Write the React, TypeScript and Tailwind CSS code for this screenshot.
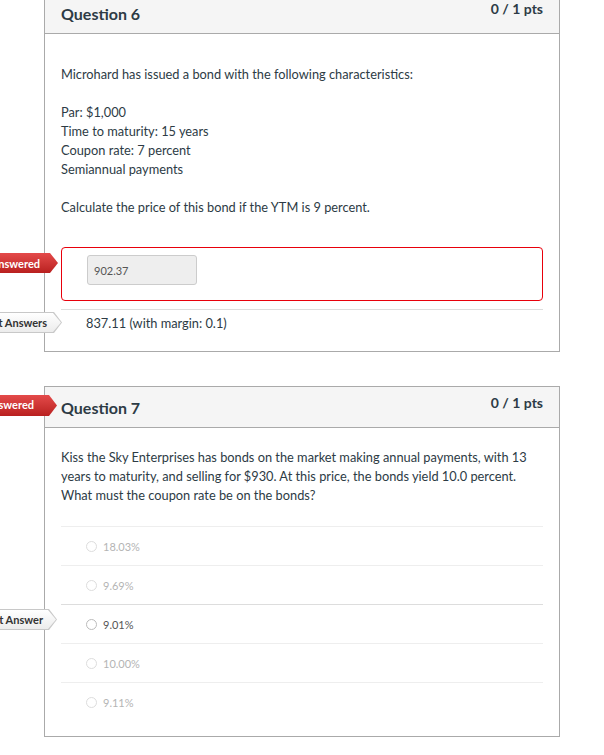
import React from 'react';

type Tag = { text: string; kind: 'red' | 'gray'; top: number; tip: number; pr: number; h: number; base: number };

// base = page x of the containing block's left edge, tip = page x of the arrow point
const Flag = ({ tag }: { tag: Tag }) => {
    const w = 130;
    const left = tag.tip - w - tag.base;
    const shape = "[clip-path:polygon(0_0,calc(100%-8px)_0,100%_50%,calc(100%-8px)_100%,0_100%)]";
    if (tag.kind === 'red') {
        return (
            <div className="absolute z-10" style={{ top: tag.top, left, width: w }}>
                <div
                    className={`${shape} flex items-center justify-end bg-linear-to-b from-[#e44a4a] to-[#b91f1f] text-white font-bold text-[11px] whitespace-nowrap`}
                    style={{ height: tag.h, paddingRight: tag.pr }}
                >
                    {tag.text}
                </div>
            </div>
        );
    }
    return (
        <div className="absolute z-10" style={{ top: tag.top, left, width: w }}>
            <div className={`${shape} bg-[#c8c8c8] py-px pr-px`}>
                <div
                    className={`${shape} flex items-center justify-end bg-linear-to-b from-white to-[#ececec] text-[#333] font-bold text-[11px] whitespace-nowrap`}
                    style={{ height: tag.h - 2, paddingRight: tag.pr - 1 }}
                >
                    {tag.text}
                </div>
            </div>
        </div>
    );
};

const Header = ({ title }: { title: string }) => (
    <div className="flex justify-between items-start px-4 h-[41px] bg-[#f5f5f5] border-b border-[#aaa]">
        <h2 className="pt-[11px] text-[16px] leading-[20px] font-bold text-[#2d3b45]">{title}</h2>
        <div className="pt-[7px] text-[14px] leading-[18px] font-bold text-[#2d3b45]">0 / 1 pts</div>
    </div>
);

const options = [
    { label: "18.03%", strong: false },
    { label: "9.69%", strong: false },
    { label: "9.01%", strong: true },
    { label: "10.00%", strong: false },
    { label: "9.11%", strong: false },
];

export default function App() {
    return (
        <div className="min-h-screen bg-white font-['Lato','Open_Sans',sans-serif] text-[#2d3b45] overflow-hidden">
            {/* Question 6 */}
            <div className="relative ml-[44px] w-[516px] -mt-[8px] border border-[#aaa] bg-white">
                <Header title="Question 6" />
                <div className="px-4 pt-[31px] text-[12.8px] leading-[19px]">
                    <p className="mb-[19px]">Microhard has issued a bond with the following characteristics:</p>
                    <p className="mb-[19px]">
                        Par: $1,000<br />
                        Time to maturity: 15 years<br />
                        Coupon rate: 7 percent<br />
                        Semiannual payments
                    </p>
                    <p>Calculate the price of this bond if the YTM is 9 percent.</p>

                    <div className="relative mt-[30px] border border-[#e8000b] rounded-[4px] h-[54px] pt-[7px] pl-[25px]">
                        <Flag tag={{ text: "Unanswered", kind: 'red', top: 5, tip: 58, pr: 18, h: 20, base: 62 }} />
                        <div className="w-[110px] h-[30px] bg-[#eee] border border-[#ccc] rounded-[3px] flex items-center pl-[6px] text-[11px] text-[#555]">
                            902.37
                        </div>
                    </div>

                    <div className="relative mt-[8px] border-t border-[#ddd] pt-[4px] pb-[18px] pl-[25px]">
                        <Flag tag={{ text: "Correct Answers", kind: 'gray', top: 2, tip: 62, pr: 15, h: 21, base: 61 }} />
                        837.11 (with margin: 0.1)
                    </div>
                </div>
            </div>

            {/* Question 7 */}
            <div className="relative ml-[44px] w-[516px] mt-[34px] border border-[#aaa] bg-white">
                <Flag tag={{ text: "Unanswered", kind: 'red', top: 8, tip: 57, pr: 23, h: 21, base: 45 }} />
                <Header title="Question 7" />
                <div className="px-4 pt-[20px] pb-[15px] text-[12.8px] leading-[19px]">
                    <p>
                        Kiss the Sky Enterprises has bonds on the market making annual payments, with 13 years to maturity, and selling for $930. At this price, the bonds yield 10.0 percent. What must the coupon rate be on the bonds?
                    </p>
                    <div className="mt-[21px]">
                        {options.map((o, i) => (
                            <div
                                key={i}
                                className={`relative flex items-center h-[39px] border-t ${o.strong ? 'border-[#ddd]' : 'border-[#eee]'} pl-[25px] gap-[6px]`}
                            >
                                {o.strong && (
                                    <Flag tag={{ text: "Correct Answer", kind: 'gray', top: 4, tip: 57, pr: 14, h: 21, base: 61 }} />
                                )}
                                <span className={`w-[11px] h-[11px] rounded-full border ${o.strong ? 'border-[#bbb]' : 'border-[#ddd]'} bg-white`}></span>
                                <span className={`text-[11px] ${o.strong ? 'text-[#555]' : 'text-[#b4b4b4]'}`}>{o.label}</span>
                            </div>
                        ))}
                    </div>
                </div>
            </div>
        </div>
    );
}
